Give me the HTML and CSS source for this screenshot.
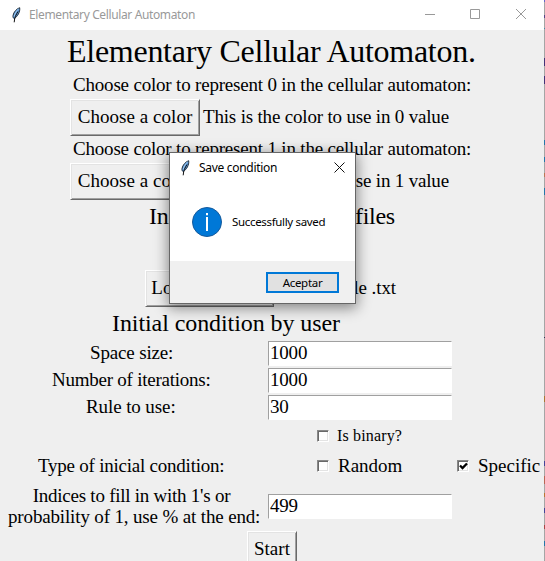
FILE: index.html
```html
<!DOCTYPE html>
<html lang="en">
<head>
<meta charset="utf-8">
<title>Elementary Cellular Automaton</title>
<link rel="stylesheet" href="styles.css">
</head>
<body>
<svg class="defs" width="0" height="0"><defs>
<symbol id="feather" viewBox="0 0 10 16"><path d="M8.700 .7C5.800 1.500 2.500 5.200 2 8.500c-.3 1.700.3 2.500 1.200 3.200C6.600 9.400 9.300 5 8.700 .7z" fill="#5b97d6" stroke="#18222c" stroke-width=".9"/><path d="M7.600 1.900C5 4 4 6.500 3.300 9.500" fill="none" stroke="#a5cdf0" stroke-width="1"/><path d="M7 4.500C5 8 3.500 10 3.200 15.300" fill="none" stroke="#111" stroke-width="1"/></symbol>
</defs></svg>
<div class="screen">
<main class="window">
<header class="titlebar"><svg class="feather"><use href="#feather"/></svg><span class="caption">Elementary Cellular Automaton</span>
<svg class="controls" width="112" height="12" viewBox="0 0 112 12"><path d="M0 5.500h10M45.500 .5h9v9h-9z" fill="none" stroke="#999"/><path d="M91 0l10 10M101 0l-10 10" stroke="#999" fill="none"/></svg></header>
<h1 class="row title"><span>Elementary Cellular Automaton.</span></h1>
<div class="row label"><span>Choose color to represent 0 in the cellular automaton:</span></div>
<div class="row pick"><button>Choose a color</button><span>This is the color to use in 0 value</span></div>
<div class="row label"><span>Choose color to represent 1 in the cellular automaton:</span></div>
<div class="row pick"><button>Choose a color</button><span>This is the color to use in 1 value</span></div>
<h2 class="row files"><span>Initial condition from files</span></h2>
<div class="row load"><button>Load condition</button><span>Choose file .txt</span></div>
<h2 class="row user"><span>Initial condition by user</span></h2>
<section class="fields">
<label class="name size">Space size:</label><input value="1000">
<label class="name iter">Number of iterations:</label><input value="1000">
<label class="name rule">Rule to use:</label><input value="30">
</section>
<div class="row binary"><i class="check"></i><span>Is binary?</span></div>
<div class="row type"><span class="kind">Type of inicial condition:</span><i class="check"></i><span class="random">Random</span><i class="check"><svg width="9" height="9" viewBox="0 0 9 9"><path d="M1 3.500l2.500 2.500L8 1.500" fill="none" stroke="#000" stroke-width="2.300"/></svg></i><span class="specific">Specific</span></div>
<div class="row indices"><p><span class="ind1">Indices to fill in with 1's or</span><br><span class="ind2">probability of 1, use % at the end:</span></p><input value="499"></div>
<div class="row start"><button>Start</button></div>
</main>
<aside class="edge"></aside>
<section class="dialog">
<header><svg class="feather"><use href="#feather"/></svg><span class="dlgtitle">Save condition</span><svg class="close" width="11" height="11" viewBox="0 0 11 11"><path d="M.5 .5l10 10M10.500 .5l-10 10" stroke="#111" fill="none"/></svg></header>
<div class="message"><svg width="30" height="30" viewBox="0 0 30 30"><circle cx="15" cy="15" r="14.500" fill="#0078d7" stroke="#155a9c"/><path d="M14 6h2v2.200h-2zM14 10h2v14h-2z" fill="#fff"/></svg><span>Successfully saved</span></div>
<footer><button class="accept"><span>Aceptar</span></button></footer>
</section>
</div>
</body>
</html>
```
FILE: styles.css
```css
* { box-sizing: border-box; }
body { margin: 0; overflow: hidden; }
.defs { position: absolute; }
.screen { position: relative; display: flex; width: 545px; height: 561px; overflow: hidden; font: 19px "Liberation Serif", serif; color: #000; }
.window { width: 544px; height: 561px; background: #efefef; overflow: hidden; }
.edge { width: 1px; background: linear-gradient(#66c 0 2px, #a5a5a5 2px 15px, #548 15px 18px, #a5a5a5 18px 28px, #48a 28px 29px, #a5a5a5 29px 58px, #437 58px 66px, #a5a5a5 66px 76px, #437 76px 84px, #a5a5a5 84px 140px, #27a 140px 145px, #a5a5a5 145px 157px, #27a 157px 162px, #a5a5a5 162px 173px, #b75 173px 177px, #a5a5a5 177px 188px, #27a 188px 195px, #a5a5a5 195px 337px, #335 337px 338px, #a5a5a5 338px 396px, #a73 396px 402px, #a5a5a5 402px 461px, #449 461px 466px, #a5a5a5 466px 476px, #b65 476px 484px, #a5a5a5 484px 493px, #b73 493px 497px, #a5a5a5 497px 508px, #449 508px 513px, #a5a5a5 513px 525px, #a44 525px 529px, #a5a5a5 529px 541px, #27a 541px 546px, #a5a5a5 546px); }
.titlebar { display: flex; align-items: center; height: 30px; padding-bottom: 1px; background: #fff; padding-left: 11px; font: 12px "Noto Sans", sans-serif; color: #999; }
.feather { width: 10px; height: 16px; flex: none; }
.caption { margin-left: 8px; letter-spacing: -.37px; }
.controls { margin-left: auto; margin-right: 7px; }
.row { display: flex; align-items: center; margin: 0; font-weight: normal; white-space: nowrap; }
.title { height: 42px; padding-left: 67px; font-size: 32px; letter-spacing: -.27px; }
.label { height: 27px; padding: 0 0 2px 73px; letter-spacing: -.19px; }
.pick { height: 37px; padding-left: 70px; }
.pick span { margin-left: 3px; padding-bottom: 2px; letter-spacing: -.18px; }
button { width: 130px; height: 37px; padding: 0 0 2px; font: inherit; letter-spacing: .05px; color: #000; background: #efefef; border: 1px solid; border-color: #fff #696969 #696969 #fff; box-shadow: inset 1px 1px #e3e3e3, inset -1px -1px #a0a0a0; white-space: nowrap; border-radius: 0; }
.files { height: 33px; padding-left: 149px; font-size: 24px; letter-spacing: -.29px; }
.load { margin-top: 37px; height: 37px; padding-left: 145px; }
.load button { width: 129px; }
.load span { margin-left: auto; margin-right: 148px; padding-bottom: 2px; letter-spacing: -.1px; }
.user { height: 34px; padding: 0 0 2px 112px; font-size: 24px; letter-spacing: -.08px; }
.fields { display: grid; grid-template-columns: 268px 184px; grid-auto-rows: 25px; row-gap: 2px; align-items: center; }
.name { padding-bottom: 2px; }
.size { padding-left: 90px; letter-spacing: -.16px; }
.iter { padding-left: 52px; letter-spacing: -.24px; }
.rule { padding-left: 86px; letter-spacing: -.1px; }
input { width: 184px; height: 25px; padding: 0 0 1px 1px; font: inherit; letter-spacing: -.2px; color: #000; background: #fff; border: 1px solid; border-color: #a0a0a0 #fff #fff #a0a0a0; border-radius: 0; outline: 0; }
.check { width: 12px; height: 12px; background: #fff; border: 1px solid; border-color: #888 #fff #fff #888; box-shadow: inset 1px 1px #696969, inset -1px -1px #e3e3e3; flex: none; display: flex; align-items: center; justify-content: center; }
.binary { height: 31px; padding-left: 317px; font-size: 16px; }
.binary span { margin-left: 8px; letter-spacing: .15px; }
.type { height: 30px; padding-left: 38px; }
.kind { width: 279px; letter-spacing: -.23px; }
.random { width: 119px; margin-left: 9px; }
.specific { margin-left: 9px; }
.indices { height: 50px; padding-left: 8px; }
.indices p { width: 260px; margin: 0; line-height: 21px; padding-right: 8px; text-align: center; }
.ind1 { letter-spacing: -.25px; margin-right: 5px; }
.ind2 { letter-spacing: -.15px; }
.start { padding-left: 247px; }
.start button { width: 50px; }
.dialog { position: absolute; left: 169px; top: 152px; width: 187px; height: 152px; background: #fff; border: 1px solid #666; box-shadow: 0 3px 13px 1px rgba(0,0,0,.45); font: 11.500px "Noto Sans", sans-serif; }
.dialog header { display: flex; align-items: center; height: 29px; padding-left: 10px; font-size: 12px; }
.dlgtitle { margin-left: 9px; letter-spacing: -.3px; }
.close { margin-left: auto; margin-right: 10px; }
.message { display: flex; align-items: center; height: 79px; padding-left: 22px; }
.message span { margin-left: 10px; letter-spacing: -.33px; }
.dialog footer { display: flex; justify-content: flex-end; height: 42px; padding: 11px 16px 0 0; background: #f0f0f0; }
.accept { width: 73px; height: 21px; padding: 0; border: 2px solid #0078d7; background: #e1e1e1; box-shadow: none; line-height: 16px; letter-spacing: -.3px; }
```
